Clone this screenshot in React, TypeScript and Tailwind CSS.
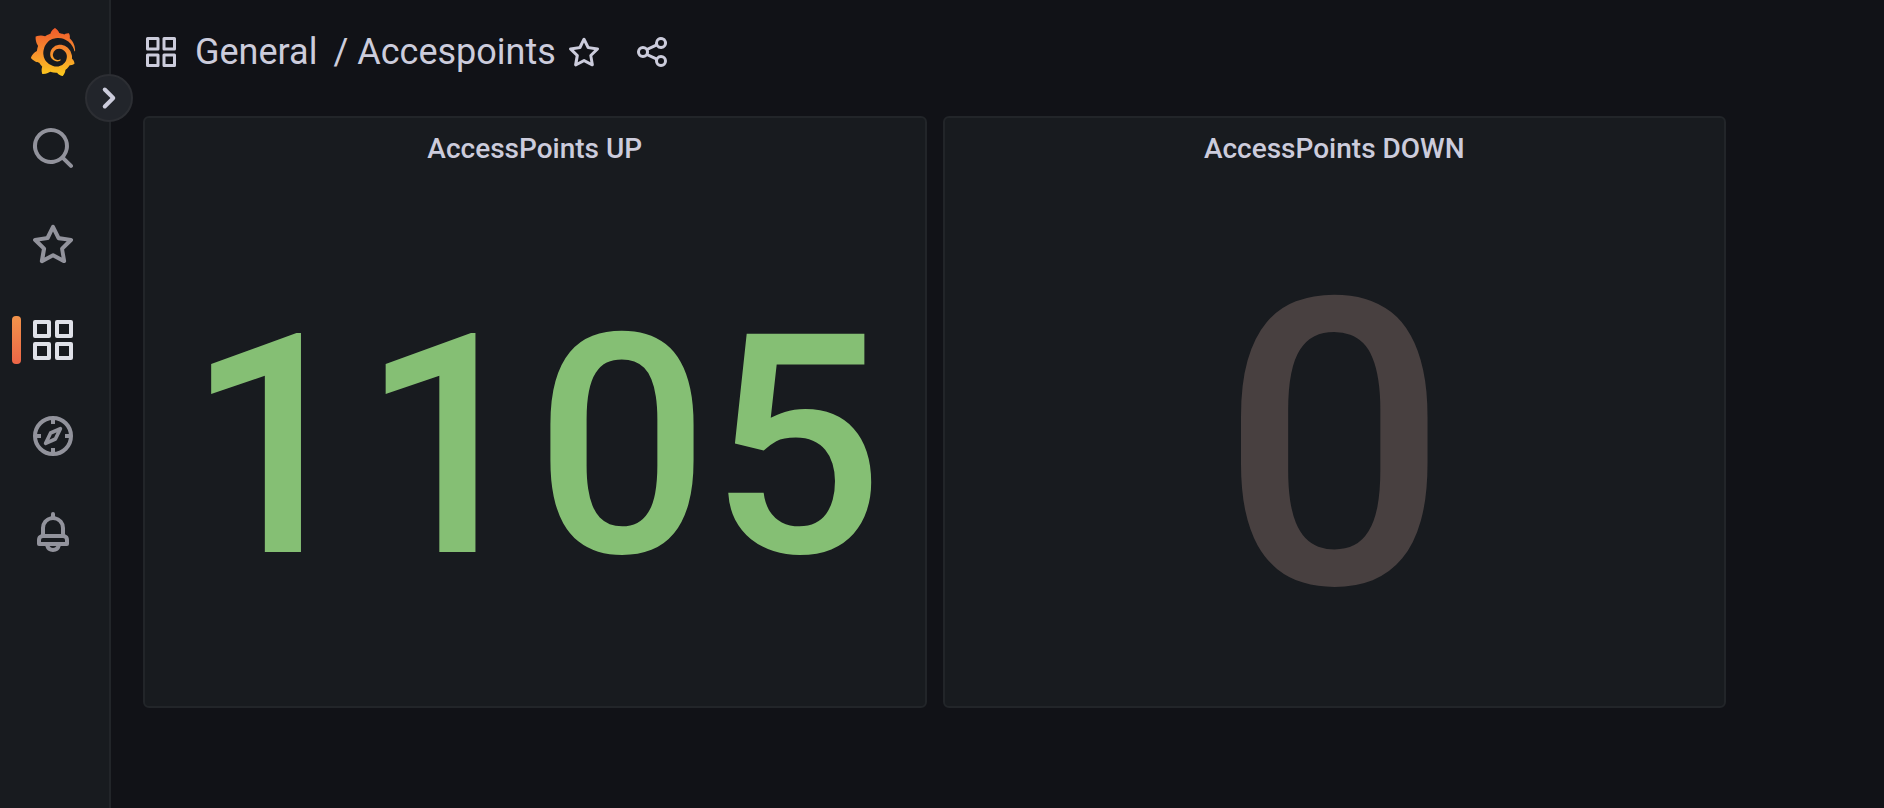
import React from "react";
import { SiGrafana } from "react-icons/si";

const paths = {
  search:
    "M21.71,20.29,18,16.61A9,9,0,1,0,16.61,18l3.68,3.68a1,1,0,0,0,1.42,0A1,1,0,0,0,21.71,20.29ZM11,18a7,7,0,1,1,7-7A7,7,0,0,1,11,18Z",
  star: "M22,9.67A1,1,0,0,0,21.14,9l-5.69-.83L12.9,3a1,1,0,0,0-1.8,0L8.55,8.16,2.86,9a1,1,0,0,0-.81.68,1,1,0,0,0,.25,1l4.13,4-1,5.68A1,1,0,0,0,6.9,21.44L12,18.77l5.1,2.67a.93.93,0,0,0,.46.12,1,1,0,0,0,.59-.19,1,1,0,0,0,.4-1l-1-5.68,4.13-4A1,1,0,0,0,22,9.67Zm-6.15,4a1,1,0,0,0-.29.88l.72,4.2-3.76-2a1.06,1.06,0,0,0-.94,0l-3.76,2,.72-4.2a1,1,0,0,0-.29-.88l-3-3,4.21-.61a1,1,0,0,0,.76-.55L12,5.7l1.88,3.82a1,1,0,0,0,.76.55l4.21.61Z",
  apps: "M10,13H3a1,1,0,0,0-1,1v7a1,1,0,0,0,1,1h7a1,1,0,0,0,1-1V14A1,1,0,0,0,10,13ZM9,20H4V15H9ZM21,2H14a1,1,0,0,0-1,1v7a1,1,0,0,0,1,1h7a1,1,0,0,0,1-1V3A1,1,0,0,0,21,2ZM20,9H15V4h5Zm1,4H14a1,1,0,0,0-1,1v7a1,1,0,0,0,1,1h7a1,1,0,0,0,1-1V14A1,1,0,0,0,21,13Zm-1,7H15V15h5ZM10,2H3A1,1,0,0,0,2,3v7a1,1,0,0,0,1,1h7a1,1,0,0,0,1-1V3A1,1,0,0,0,10,2ZM9,9H4V4H9Z",
  bell: "M18,13.18V10a6,6,0,0,0-5-5.91V3a1,1,0,0,0-2,0V4.09A6,6,0,0,0,6,10v3.18A3,3,0,0,0,4,16v2a1,1,0,0,0,1,1H8.14a4,4,0,0,0,7.72,0H19a1,1,0,0,0,1-1V16A3,3,0,0,0,18,13.18ZM8,10a4,4,0,0,1,8,0v3H8Zm4,10a2,2,0,0,1-1.72-1h3.44A2,2,0,0,1,12,20Zm6-3H6V16a1,1,0,0,1,1-1H17a1,1,0,0,1,1,1Z",
  share:
    "M18,14a4,4,0,0,0-3.08,1.48l-5.1-2.35a3.64,3.64,0,0,0,0-2.26l5.1-2.35A4,4,0,1,0,14,6a4.17,4.17,0,0,0,.07.71L8.79,9.14a4,4,0,1,0,0,5.72l5.28,2.43A4.17,4.17,0,0,0,14,18a4,4,0,1,0,4-4ZM18,4a2,2,0,1,1-2,2A2,2,0,0,1,18,4ZM6,14a2,2,0,1,1,2-2A2,2,0,0,1,6,14Zm12,6a2,2,0,1,1,2-2A2,2,0,0,1,18,20Z",
  angleRight:
    "M14.83,11.29,10.59,7.05a1,1,0,0,0-1.42,0,1,1,0,0,0,0,1.41L12.71,12,9.17,15.54a1,1,0,0,0,0,1.41,1,1,0,0,0,.71.29,1,1,0,0,0,.71-.29l4.24-4.24A1,1,0,0,0,14.83,11.29Z",
};

function Icon({ name, className }: { name: keyof typeof paths; className: string }) {
  return (
    <svg viewBox="0 0 24 24" fill="currentColor" aria-hidden="true" className={className}>
      <path d={paths[name]} />
    </svg>
  );
}

function Compass({ className }: { className: string }) {
  return (
    <svg
      viewBox="0 0 24 24"
      fill="none"
      stroke="currentColor"
      strokeWidth="2"
      aria-hidden="true"
      className={className}
    >
      <circle cx="12" cy="12" r="9" />
      <path d="M12 3v3M12 18v3M3 12h3M18 12h3" />
      <path d="M15.7 8.3l-4.9 2.2-2.5 5.2 4.9-2.2z" strokeWidth="1.8" strokeLinejoin="round" />
    </svg>
  );
}

function NavLink({
  label,
  active = false,
  children,
}: {
  label: string;
  active?: boolean;
  children: React.ReactNode;
}) {
  return (
    <li>
      <a
        href="#"
        aria-label={label}
        className={
          active
            ? "relative flex h-24 items-center justify-center text-[#dfe1e8]"
            : "relative flex h-24 items-center justify-center text-[#92939c]"
        }
      >
        {active && (
          <span className="absolute left-3 h-12 w-[9px] rounded-sm bg-linear-to-b from-[#f2934a] to-[#ec6547]" />
        )}
        {children}
      </a>
    </li>
  );
}

function Panel({ title, children }: { title: string; children: React.ReactNode }) {
  return (
    <section className="flex h-[592px] min-w-0 flex-1 flex-col rounded-md border-2 border-[#222529] bg-[#181b1f]">
      <h2 className="pt-3 text-center text-[28px] leading-[38px] font-medium">{title}</h2>
      <div className="flex min-h-0 flex-1 items-center justify-center pt-5 font-medium">{children}</div>
    </section>
  );
}

export default function App() {
  return (
    <div className="flex min-h-screen bg-[#111217] font-['Roboto',sans-serif] text-[#ccccdc]">
      <nav className="relative w-[111px] shrink-0 border-r-2 border-[#222529] bg-[#181b1f] pr-1">
        <svg className="absolute size-0" aria-hidden="true">
          <linearGradient id="flame" x1="0" y1="0" x2="0" y2="1">
            <stop offset="0" stopColor="#f05a2b" />
            <stop offset="0.5" stopColor="#f68d2e" />
            <stop offset="1" stopColor="#fbca1d" />
          </linearGradient>
        </svg>
        <a href="#" aria-label="Home" className="flex h-[100px] items-center justify-center pt-1">
          <SiGrafana fill="url(#flame)" className="size-12" />
        </a>
        <ul>
          <NavLink label="Search">
            <Icon name="search" className="size-12" />
          </NavLink>
          <NavLink label="Starred">
            <Icon name="star" className="size-12" />
          </NavLink>
          <NavLink label="Dashboards" active>
            <Icon name="apps" className="size-12" />
          </NavLink>
          <NavLink label="Explore">
            <Compass className="size-12" />
          </NavLink>
          <NavLink label="Alerting">
            <Icon name="bell" className="size-12" />
          </NavLink>
        </ul>
        <button
          type="button"
          aria-label="Expand menu"
          className="absolute top-[74px] -right-6 flex size-12 items-center justify-center rounded-full border-2 border-[#2c2e33] bg-[#22252b]"
        >
          <Icon name="angleRight" className="size-12 shrink-0" />
        </button>
      </nav>
      <main className="min-w-0 flex-1 pl-8">
        <header className="flex h-[116px] items-center pb-3">
          <Icon name="apps" className="size-9" />
          <h1 className="flex pl-4 text-4xl font-normal whitespace-pre">
            <a href="#">General</a>
            <span className="pl-4">/ </span>
            <a href="#">Accespoints</a>
          </h1>
          <button type="button" aria-label="Mark as favorite" className="ml-2.5">
            <Icon name="star" className="size-9" />
          </button>
          <button type="button" aria-label="Share dashboard" className="ml-8">
            <Icon name="share" className="size-9" />
          </button>
        </header>
        <div className="flex gap-4 pr-[158px]">
          <Panel title="AccessPoints UP">
            <span className="text-[307px] leading-none text-[#85bf74]">1105</span>
          </Panel>
          <Panel title="AccessPoints DOWN">
            <span className="text-[400px] leading-none text-[#484040]">0</span>
          </Panel>
        </div>
      </main>
    </div>
  );
}
